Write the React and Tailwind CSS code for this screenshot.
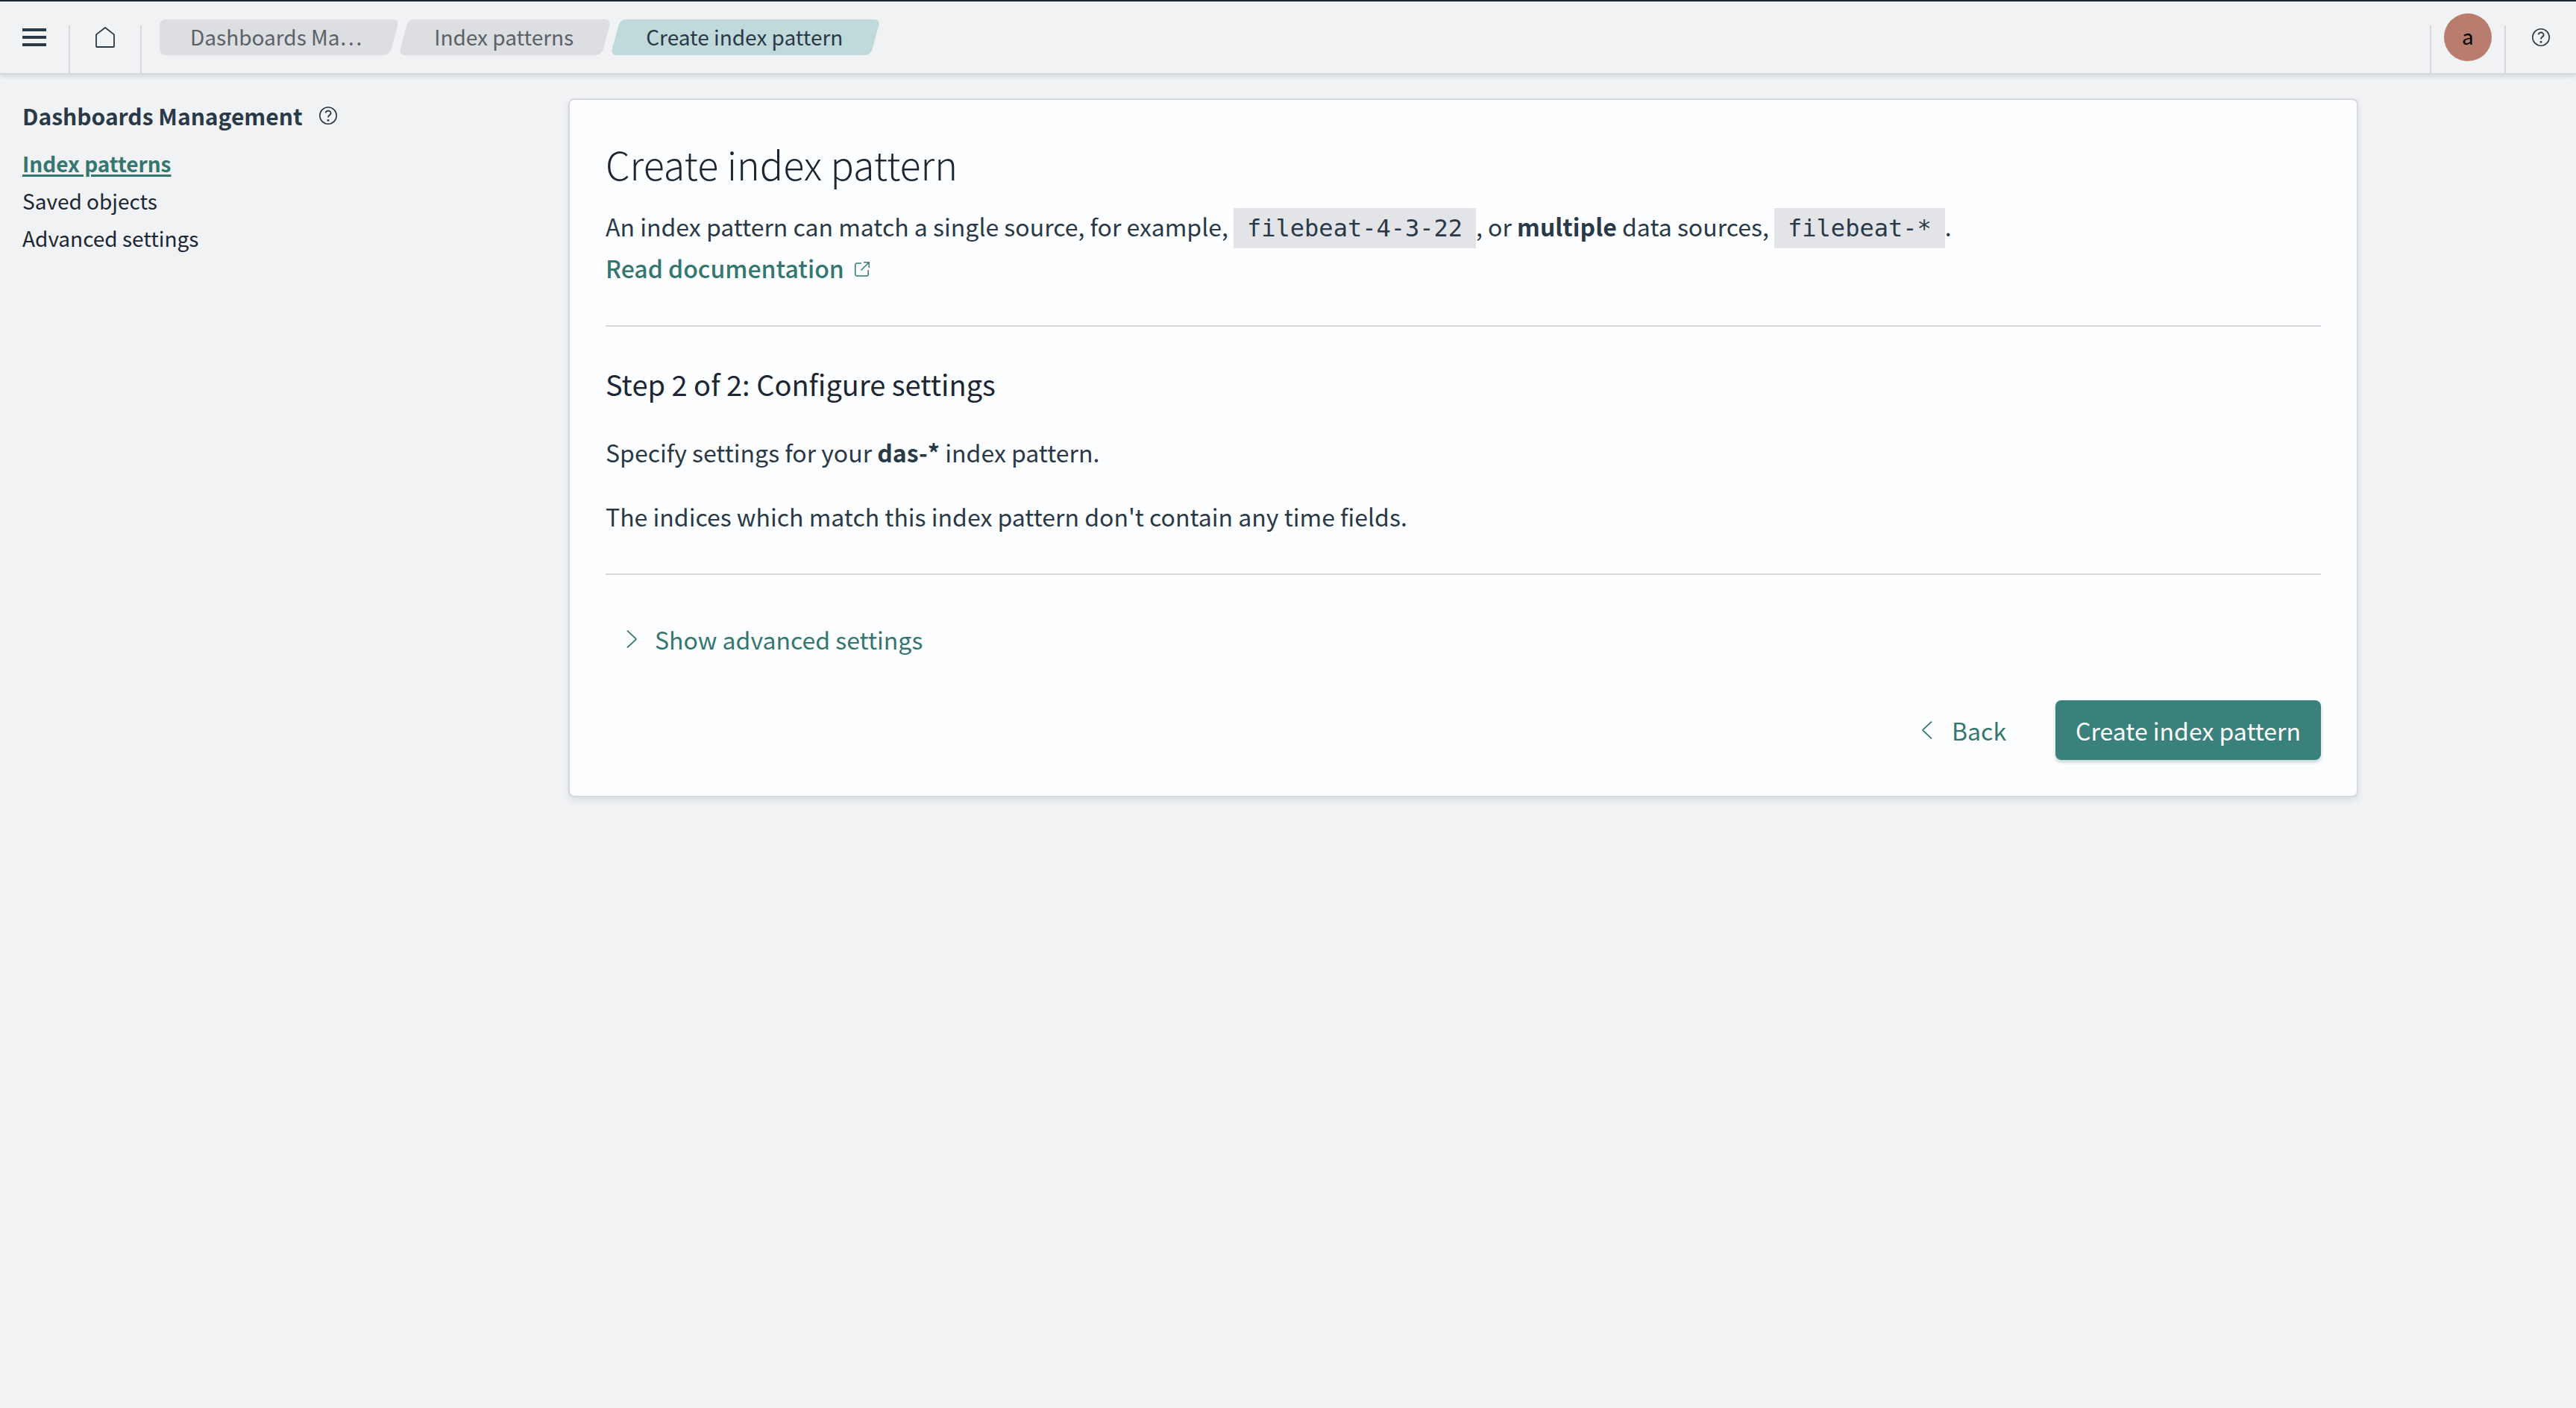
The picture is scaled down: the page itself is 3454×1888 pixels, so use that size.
import React from "react";

const SANS = "font-['Noto_Sans_CJK_SC','Noto_Sans',sans-serif]";
const MONO = "font-['DejaVu_Sans_Mono',monospace]";

function HelpIcon() {
  return (
    <svg viewBox="0 0 24 24" className="size-6 shrink-0" fill="none" stroke="currentColor" aria-hidden="true">
      <circle cx="12" cy="12" r="11.2" strokeWidth="1.6" />
      <path d="M8.600 8.400a3.500 3.100 0 1 1 5.400 2.800c-1.300.9-2 1.700-2 3.400" strokeWidth="1.8" />
      <path d="M12 17v2.600" strokeWidth="2.600" />
    </svg>
  );
}

function HomeIcon() {
  return (
    <svg viewBox="0 0 26 28" className="h-7 w-[26px]" fill="none" stroke="currentColor" strokeWidth="1.8" strokeLinejoin="round" aria-hidden="true">
      <path d="M1 10.400 13 1l12 9.400V26a1 1 0 0 1-1 1H2a1 1 0 0 1-1-1z" />
    </svg>
  );
}

function MenuIcon() {
  return (
    <svg viewBox="0 0 32 24" className="h-6 w-8" fill="currentColor" aria-hidden="true">
      <path d="M0 0h32v4H0zM0 10h32v4H0zM0 20h32v4H0z" />
    </svg>
  );
}

function ExternalIcon() {
  return (
    <svg viewBox="0 0 20 20" className="mt-1 size-5" fill="none" stroke="currentColor" strokeWidth="1.500" aria-hidden="true">
      <path d="M9 2H2.500A1.800 1.800 0 0 0 .8 3.800v13.500a1.800 1.800 0 0 0 1.700 1.800h14a1.800 1.800 0 0 0 1.700-1.800V11" />
      <path d="M12 .8h7.200V8M19 1 8.500 11.500" />
    </svg>
  );
}

function Chevron({ left }) {
  return (
    <svg viewBox="0 0 14 24" className="h-6 w-[14px]" fill="none" stroke="currentColor" strokeWidth="1.8" strokeLinejoin="round" aria-hidden="true">
      <path d={left ? "M13 .6 1.500 11.400q-.6.6 0 1.200L13 23.400" : "M1 .6 12.500 11.400q.6.6 0 1.200L1 23.400"} />
    </svg>
  );
}

function Crumb({ children, first, current }) {
  const fill = current ? "bg-[#c0dadb]" : "bg-[#dddee1]";
  return (
    <li className="grid h-12">
      {first && <span className={`mr-8 rounded-lg [grid-area:1/1] ${fill}`} />}
      <span className={`-skew-x-15 rounded-lg [grid-area:1/1] ${first ? "ml-8" : ""} ${fill}`} />
      <a
        href="#"
        aria-current={current ? "page" : undefined}
        className={`z-10 self-start pr-11 pl-[41px] text-[28px] leading-[46px] whitespace-nowrap [grid-area:1/1] ${current ? "text-[#2a3947]" : "text-[#5a6169]"}`}
      >
        {children}
      </a>
    </li>
  );
}

function Code({ children }) {
  return <code className={`bg-[#e3e4e8] px-[18px] py-2 text-[32px] leading-none ${MONO}`}>{children}</code>;
}

export default function App() {
  return (
    <div className={`min-h-screen bg-[#f0f2f4] text-[#2a3947] ${SANS}`}>
      <header className="flex h-[100px] items-end border-t-2 border-b-2 border-t-[#1d2630] border-b-[#d6d8db] shadow-[0_2px_6px_rgba(70,110,120,0.22)]">
        <div className="flex h-16 w-[94px] border-r-2 border-[#d6d8db]">
          <button type="button" aria-label="Menu" className="-mt-1 flex h-10 w-full items-center justify-center">
            <MenuIcon />
          </button>
        </div>
        <div className="flex h-16 w-24 border-r-2 border-[#d6d8db]">
          <a href="#" aria-label="Home" className="-mt-1 flex h-10 w-full items-center justify-center">
            <HomeIcon />
          </a>
        </div>
        <nav aria-label="Breadcrumbs" className="mb-6 ml-6">
          <ol className="flex gap-3">
            <Crumb first>Dashboards Ma…</Crumb>
            <Crumb>Index patterns</Crumb>
            <Crumb current>Create index pattern</Crumb>
          </ol>
        </nav>
        <div className="ml-auto flex h-16 w-[100px] justify-center border-l-2 border-[#d6d8db]">
          <button type="button" className="-mt-4 size-16 rounded-full bg-[#b97d6f] pb-1 text-center text-[28px] leading-[60px] text-black">
            a
          </button>
        </div>
        <div className="flex h-16 w-24 border-l-2 border-[#d6d8db]">
          <button type="button" aria-label="Help" className="-mt-1 flex h-10 w-full items-center justify-center">
            <HelpIcon />
          </button>
        </div>
      </header>

      <div className="flex">
        <aside className="w-[470px] shrink-0 pt-8 pl-[30px]">
          <div className="flex items-center gap-[22px]">
            <h2 className="text-[30px] leading-[46px] font-bold whitespace-nowrap">Dashboards Management</h2>
            <HelpIcon />
          </div>
          <nav className="mt-4 flex flex-col items-start text-[28px] leading-[50px] text-[#1c2733]">
            <a href="#" className="font-bold text-[#357670] underline decoration-3 underline-offset-3">Index patterns</a>
            <a href="#">Saved objects</a>
            <a href="#">Advanced settings</a>
          </nav>
        </aside>

        <main className="flex flex-1 justify-center pt-8">
          <section className="w-full max-w-[2400px] rounded-lg border-2 border-[#d6d8db] bg-[#fdfeff] p-12 text-[32px] leading-14 shadow-[0_4px_8px_rgba(70,80,100,0.12)]">
            <h1 className="text-[52px] leading-[75px] font-light text-[#1c2733]">Create index pattern</h1>
            <p className="mt-[18px]">
              An index pattern can match a single source, for example, <Code>filebeat-4-3-22</Code>, or <strong>multiple</strong> data sources, <Code>filebeat-*</Code>.
              <br />
              <a href="#" className="inline-flex items-center gap-[14px] font-medium text-[#357670]">
                Read documentation
                <ExternalIcon />
              </a>
            </p>
            <hr className="mt-[49px] border-t-2 border-[#d6d8db]" />
            <h2 className="mt-[49px] text-[38px] text-[#1c2733]">Step 2 of 2: Configure settings</h2>
            <p className="mt-[35px]">
              Specify settings for your <strong>das-*</strong> index pattern.
            </p>
            <p className="mt-[30px]">The indices which match this index pattern don't contain any time fields.</p>
            <hr className="mt-[49px] border-t-2 border-[#d6d8db]" />
            <button type="button" className="mt-[46px] flex h-20 items-center gap-6 px-7 text-[#357670]">
              <Chevron />
              Show advanced settings
            </button>
            <div className="mt-[42px] flex justify-end gap-[38px]">
              <button type="button" className="flex h-20 items-center gap-[26px] px-7 text-[#357670]">
                <Chevron left />
                Back
              </button>
              <button type="button" className="h-20 rounded-lg bg-[#3a807b] px-[27px] text-white shadow-[0_3px_5px_rgba(50,100,100,0.3)]">
                Create index pattern
              </button>
            </div>
          </section>
        </main>
      </div>
    </div>
  );
}
